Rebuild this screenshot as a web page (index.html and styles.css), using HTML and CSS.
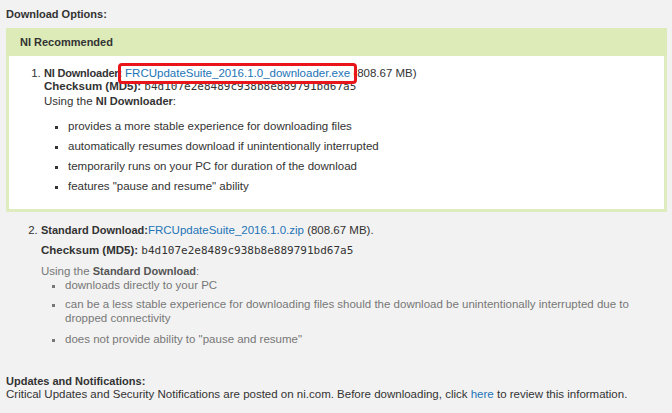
FILE: index.html
```html
<!DOCTYPE html>
<html>
<head>
<meta charset="utf-8">
<link rel="stylesheet" href="styles.css">
</head>
<body>
<div class="page">
  <div class="title">Download Options:</div>
  <div class="rec">
    <div class="rec-head">NI Recommended</div>
    <div class="rec-body">
      <ol class="dl-list">
        <li>
          <div class="line"><b class="nid">NI Downloader:</b> <span class="hl"><a href="#">FRCUpdateSuite_2016.1.0_downloader.exe</a></span> (808.67 MB)</div>
          <div class="line"><b class="lbl">Checksum (MD5):</b> <span class="mono">b4d107e2e8489c938b8e889791bd67a5</span></div>
          <div class="line use1">Using the <b>NI Downloader</b>:</div>
          <ul class="feat">
            <li>provides a more stable experience for downloading files</li>
            <li>automatically resumes download if unintentionally interrupted</li>
            <li>temporarily runs on your PC for duration of the download</li>
            <li>features "pause and resume" ability</li>
          </ul>
        </li>
      </ol>
    </div>
  </div>
  <ol class="dl-list std" start="2">
    <li>
      <div class="line"><b>Standard Download:</b><a href="#">FRCUpdateSuite_2016.1.0.zip</a> (808.67 MB).</div>
      <div class="line ck"><b class="lbl">Checksum (MD5):</b> <span class="mono">b4d107e2e8489c938b8e889791bd67a5</span></div>
      <div class="using">Using the <b>Standard Download</b>:</div>
      <ul class="feat grey">
        <li>downloads directly to your PC</li>
        <li>can be a less stable experience for downloading files should the download be unintentionally interrupted due to dropped connectivity</li>
        <li class="last">does not provide ability to "pause and resume"</li>
      </ul>
    </li>
  </ol>
  <div class="updates">
    <div class="title2">Updates and Notifications:</div>
    <div>Critical Updates and Security Notifications are posted on ni.com. Before downloading, click <a href="#">here</a> to review this information.</div>
  </div>
</div>
</body>
</html>
```
FILE: styles.css
```css
html, body {
  margin: 0;
  padding: 0;
  background: #f2f2f2;
}
body {
  font-family: "Liberation Sans", Arial, sans-serif;
  font-size: 11.5px;
  color: #333;
}
a {
  color: #2274b6;
  text-decoration: none;
}
b {
  font-weight: bold;
  font-size: 11px;
}
b.lbl {
  font-size: 11.5px;
}
b.nid {
  letter-spacing: -0.2px;
}
.page {
  padding: 7px 5px 0 6px;
}
.title {
  font-weight: bold;
  font-size: 11px;
  line-height: 14px;
  height: 21px;
}
.rec {
  border: 3px solid #dfecbf;
  border-top: 0;
}
.rec-head {
  background: #dcebb8;
  font-weight: bold;
  font-size: 11px;
  line-height: 28px;
  margin: 0 -3px;
  padding-left: 14px;
}
.rec-body {
  background: #fff;
  padding: 11px 0 13px;
}
.dl-list {
  margin: 0;
  padding-left: 35px;
}
.line {
  line-height: 13px;
}
.use1 {
  margin-top: 2px;
}
.mono {
  font-family: "DejaVu Sans Mono", monospace;
  font-size: 11px;
}
.hl {
  position: relative;
}
.hl::after {
  content: "";
  position: absolute;
  left: -7px;
  right: -7px;
  top: -4px;
  bottom: -5px;
  border: 3px solid #e8151b;
  border-radius: 4px;
}
.feat {
  list-style: square;
  margin: 8px 0 0;
  padding-left: 24px;
}
.feat li {
  line-height: 20px;
}
.std {
  margin-top: 8px;
}
.std .line {
  line-height: 20px;
}
.using {
  color: #777;
  line-height: 20px;
}
.using b {
  color: #555;
}
.feat.grey {
  color: #777;
  margin-top: -5px;
  padding-left: 24px;
}
.feat.grey li {
  line-height: 14px;
  padding: 2px 0 3px;
}
.feat.grey li.last {
  padding-top: 4px;
}
.updates {
  margin-top: 26px;
  line-height: 13px;
}
.title2 {
  font-weight: bold;
  font-size: 11px;
}
```
